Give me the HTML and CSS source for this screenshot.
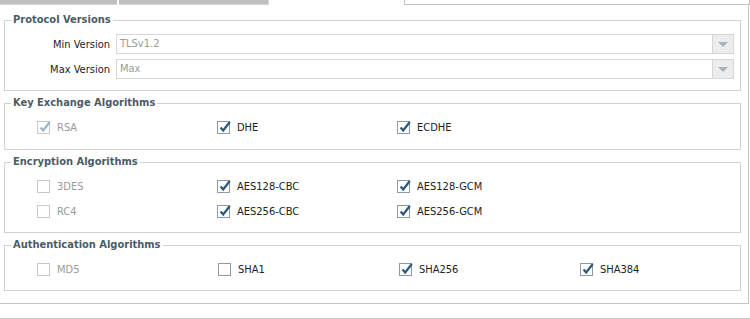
FILE: index.html
```html
<!DOCTYPE html>
<html lang="en">
<head>
  <meta charset="UTF-8" />
  <title>SSL Settings</title>
  <link rel="stylesheet" href="styles.css">
</head>
<body>
  <div class="tabs">
    <div class="tab tab-1"></div>
    <div class="tab tab-2"></div>
    <div class="tab active"></div>
    <div class="tab-rest"></div>
  </div>

  <div class="panel">
    <fieldset class="group">
      <legend>Protocol Versions</legend>
      <div class="form-grid">
        <label>Min Version</label>
        <div class="select"><span class="select-text">TLSv1.2</span><span class="select-btn"><span class="arrow"></span></span></div>
        <label>Max Version</label>
        <div class="select"><span class="select-text">Max</span><span class="select-btn"><span class="arrow"></span></span></div>
      </div>
    </fieldset>

    <fieldset class="group">
      <legend>Key Exchange Algorithms</legend>
      <div class="checks kex" id="kex"></div>
    </fieldset>

    <fieldset class="group">
      <legend>Encryption Algorithms</legend>
      <div class="checks" id="enc"></div>
    </fieldset>

    <fieldset class="group">
      <legend>Authentication Algorithms</legend>
      <div class="checks wide" id="auth"></div>
    </fieldset>
  </div>

  <div class="footer"></div>

  <script>
    var tick = '<svg viewBox="0 0 13 13" width="13" height="13"><path d="M2.6 6.4 L5.2 9.4 L11.8 1" fill="none" stroke="currentColor" stroke-width="2.3"/></svg>';

    var groups = {
      kex: [
        { nama: "RSA", on: true, off: true },
        { nama: "DHE", on: true },
        { nama: "ECDHE", on: true }
      ],
      enc: [
        { nama: "3DES", on: false, off: true },
        { nama: "AES128-CBC", on: true },
        { nama: "AES128-GCM", on: true },
        { nama: "RC4", on: false, off: true },
        { nama: "AES256-CBC", on: true },
        { nama: "AES256-GCM", on: true }
      ],
      auth: [
        { nama: "MD5", on: false, off: true },
        { nama: "SHA1", on: false },
        { nama: "SHA256", on: true },
        { nama: "SHA384", on: true }
      ]
    };

    Object.keys(groups).forEach(function (id) {
      var box = document.getElementById(id);
      groups[id].forEach(function (item) {
        var row = document.createElement("label");
        row.className = "check" + (item.off ? " disabled" : "");
        row.innerHTML = '<span class="box">' + (item.on ? tick : "") + '</span><span class="text">' + item.nama + '</span>';
        box.appendChild(row);
      });
    });
  </script>
</body>
</html>
```

FILE: styles.css
```css
body {
  font-family: "DejaVu Sans Condensed", "DejaVu Sans", sans-serif;
  font-size: 11px;
  color: #222;
  background-color: #fff;
  margin: 0;
  padding: 0;
  width: 750px;
}
.tabs {
  display: flex;
  height: 5px;
}
.tab {
  height: 4px;
  background-color: #bfbfbf;
  border-bottom: 1px solid #d6d6d6;
}
.tab-1 {
  width: 117px;
  margin-right: 2px;
}
.tab-2 {
  width: 149px;
  border-right: 1px solid #d6d6d6;
  margin-right: 1px;
}
.tab.active {
  width: 134px;
  height: 5px;
  background-color: #fff;
  border-bottom: none;
  border-right: 1px solid #c4c4c4;
}
.tab-rest {
  flex: 1;
  height: 4px;
  border-bottom: 1px solid #c4c4c4;
  border-right: 1px solid #c4c4c4;
}
.panel {
  width: 748px;
  border-right: 1px solid #c4c4c4;
  border-bottom: 1px solid #c4c4c4;
  padding: 8px 0 12px 0;
}
.group {
  margin: 0 7px 5px 4px;
  padding: 0;
  border: 1px solid #d2d2d2;
  min-width: 0;
}
.group:last-child {
  margin-bottom: 0;
}
.group legend {
  margin-left: 6px;
  padding: 0 2px;
  font-weight: bold;
  line-height: 14px;
  color: #4b5b68;
}
.form-grid {
  display: grid;
  grid-template-columns: 105px 1fr;
  column-gap: 6px;
  row-gap: 5px;
  align-items: center;
  padding: 7px 6px 11px 0;
}
.form-grid label {
  text-align: right;
}
.select {
  display: flex;
  height: 18px;
  border: 1px solid #d6d6d6;
}
.select-text {
  flex: 1;
  padding-left: 3px;
  line-height: 18px;
  color: #999;
}
.select-btn {
  width: 20px;
  background-color: #ececec;
  border-left: 1px solid #d6d6d6;
  display: flex;
  align-items: center;
  justify-content: center;
}
.arrow {
  width: 0;
  height: 0;
  border-left: 5px solid transparent;
  border-right: 5px solid transparent;
  border-top: 5px solid #a7b2ba;
}
.checks {
  display: grid;
  grid-template-columns: repeat(3, 180px);
  row-gap: 9px;
  padding: 9px 0 13px 32px;
}
.checks.kex {
  padding-bottom: 14px;
}
.checks.wide {
  grid-template-columns: repeat(4, 181px);
}
.check {
  display: flex;
  align-items: center;
  gap: 7px;
  height: 16px;
}
.box {
  width: 11px;
  height: 11px;
  border: 1px solid #8f9aa3;
  background-color: #fff;
  color: #2c5a7e;
  position: relative;
}
.box svg {
  position: absolute;
  left: 0;
  top: -1px;
}
.check.disabled {
  color: #9a9a9a;
}
.check.disabled .box {
  border-color: #c8c8c8;
  color: #9fb5c6;
}
.footer {
  margin-top: 14px;
  border-top: 1px solid #c4c4c4;
}
```
